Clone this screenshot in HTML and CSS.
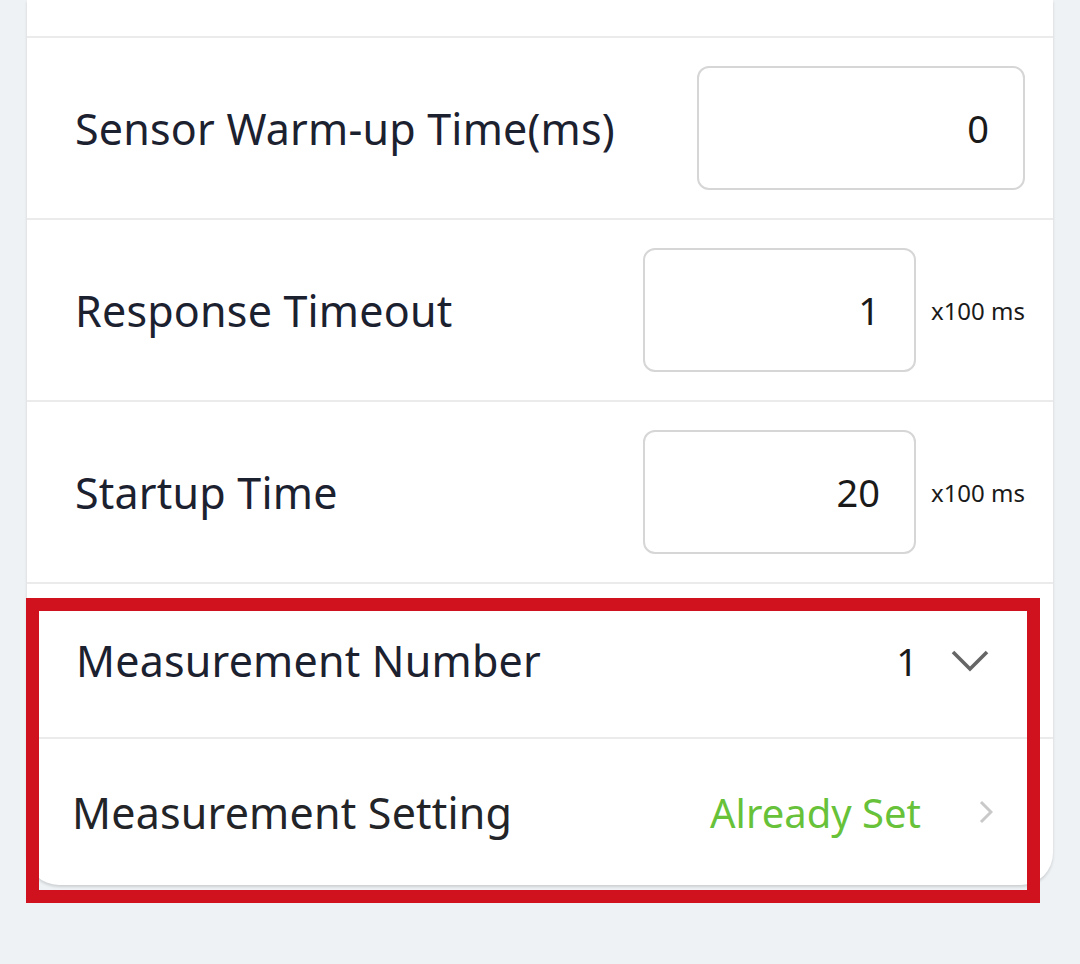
FILE: index.html
```html
<!DOCTYPE html>
<html>
<head>
<meta charset="utf-8">
<link rel="stylesheet" href="styles.css">
</head>
<body>
<div class="page">
  <div class="card">
    <div class="row stub"></div>
    <div class="row field">
      <span class="label">Sensor Warm-up Time(ms)</span>
      <div class="controls">
        <div class="box wide">0</div>
      </div>
    </div>
    <div class="row field">
      <span class="label">Response Timeout</span>
      <div class="controls">
        <div class="box">1</div>
        <span class="unit">x100 ms</span>
      </div>
    </div>
    <div class="row field">
      <span class="label">Startup Time</span>
      <div class="controls">
        <div class="box">20</div>
        <span class="unit">x100 ms</span>
      </div>
    </div>
    <div class="row select">
      <span class="label">Measurement Number</span>
      <div class="picker">
        <span class="value">1</span>
        <svg class="chev-down" width="38" height="22" viewBox="0 0 38 22"><path d="M2 2 L19 19 L36 2" fill="none" stroke="#666" stroke-width="3.6"/></svg>
      </div>
    </div>
    <div class="row link">
      <span class="label">Measurement Setting</span>
      <div class="picker">
        <span class="status">Already Set</span>
        <svg class="chev-right" width="14" height="24" viewBox="0 0 14 24"><path d="M2 2 L12 12 L2 22" fill="none" stroke="#c9c9c9" stroke-width="3"/></svg>
      </div>
    </div>
  </div>
  <div class="highlight"></div>
</div>
</body>
</html>
```

FILE: styles.css
```css
html, body {
  margin: 0;
  padding: 0;
  background: #eef2f5;
  font-family: "Noto Sans", "Open Sans", sans-serif;
}

.page {
  position: relative;
  width: 1080px;
  height: 964px;
  overflow: hidden;
}

.card {
  margin: 0 27px;
  background: #ffffff;
  border-radius: 0 0 32px 32px;
  box-shadow: 0 2px 3px rgba(0, 0, 0, 0.14);
  display: flex;
  flex-direction: column;
}

.row {
  display: flex;
  align-items: center;
  justify-content: space-between;
  border-bottom: 2px solid #ebebeb;
  box-sizing: border-box;
}

.row:last-child {
  border-bottom: none;
}

.stub {
  height: 38px;
}

.field {
  height: 182px;
  padding: 0 28px 0 48px;
}

.label {
  font-size: 43px;
  color: #1c2130;
  letter-spacing: 0.2px;
}

.controls {
  display: flex;
  align-items: center;
  gap: 15px;
}

.box {
  width: 273px;
  height: 124px;
  box-sizing: border-box;
  border: 2.5px solid #d6d6d6;
  border-radius: 12px;
  display: flex;
  align-items: center;
  justify-content: flex-end;
  padding-right: 34px;
  font-size: 38px;
  color: #1a1a1a;
}

.box.wide {
  width: 328px;
  padding-right: 34px;
}

.unit {
  font-size: 24px;
  color: #1a1a1a;
}

.select {
  height: 155px;
  padding: 0 64px 0 49px;
}

.link {
  height: 146px;
  padding: 0 60px 0 45px;
}

.link .label {
  color: #222428;
}

.picker {
  display: flex;
  align-items: center;
}

.value {
  font-size: 38px;
  color: #1a1a1a;
  margin-right: 33px;
}

.chev-down {
  display: block;
}

.status {
  font-size: 40px;
  color: #67c23a;
  margin-right: 58px;
}

.chev-right {
  display: block;
}

.highlight {
  position: absolute;
  left: 26px;
  top: 598px;
  width: 1014px;
  height: 305px;
  box-sizing: border-box;
  border: 13px solid #d0121f;
}
```
